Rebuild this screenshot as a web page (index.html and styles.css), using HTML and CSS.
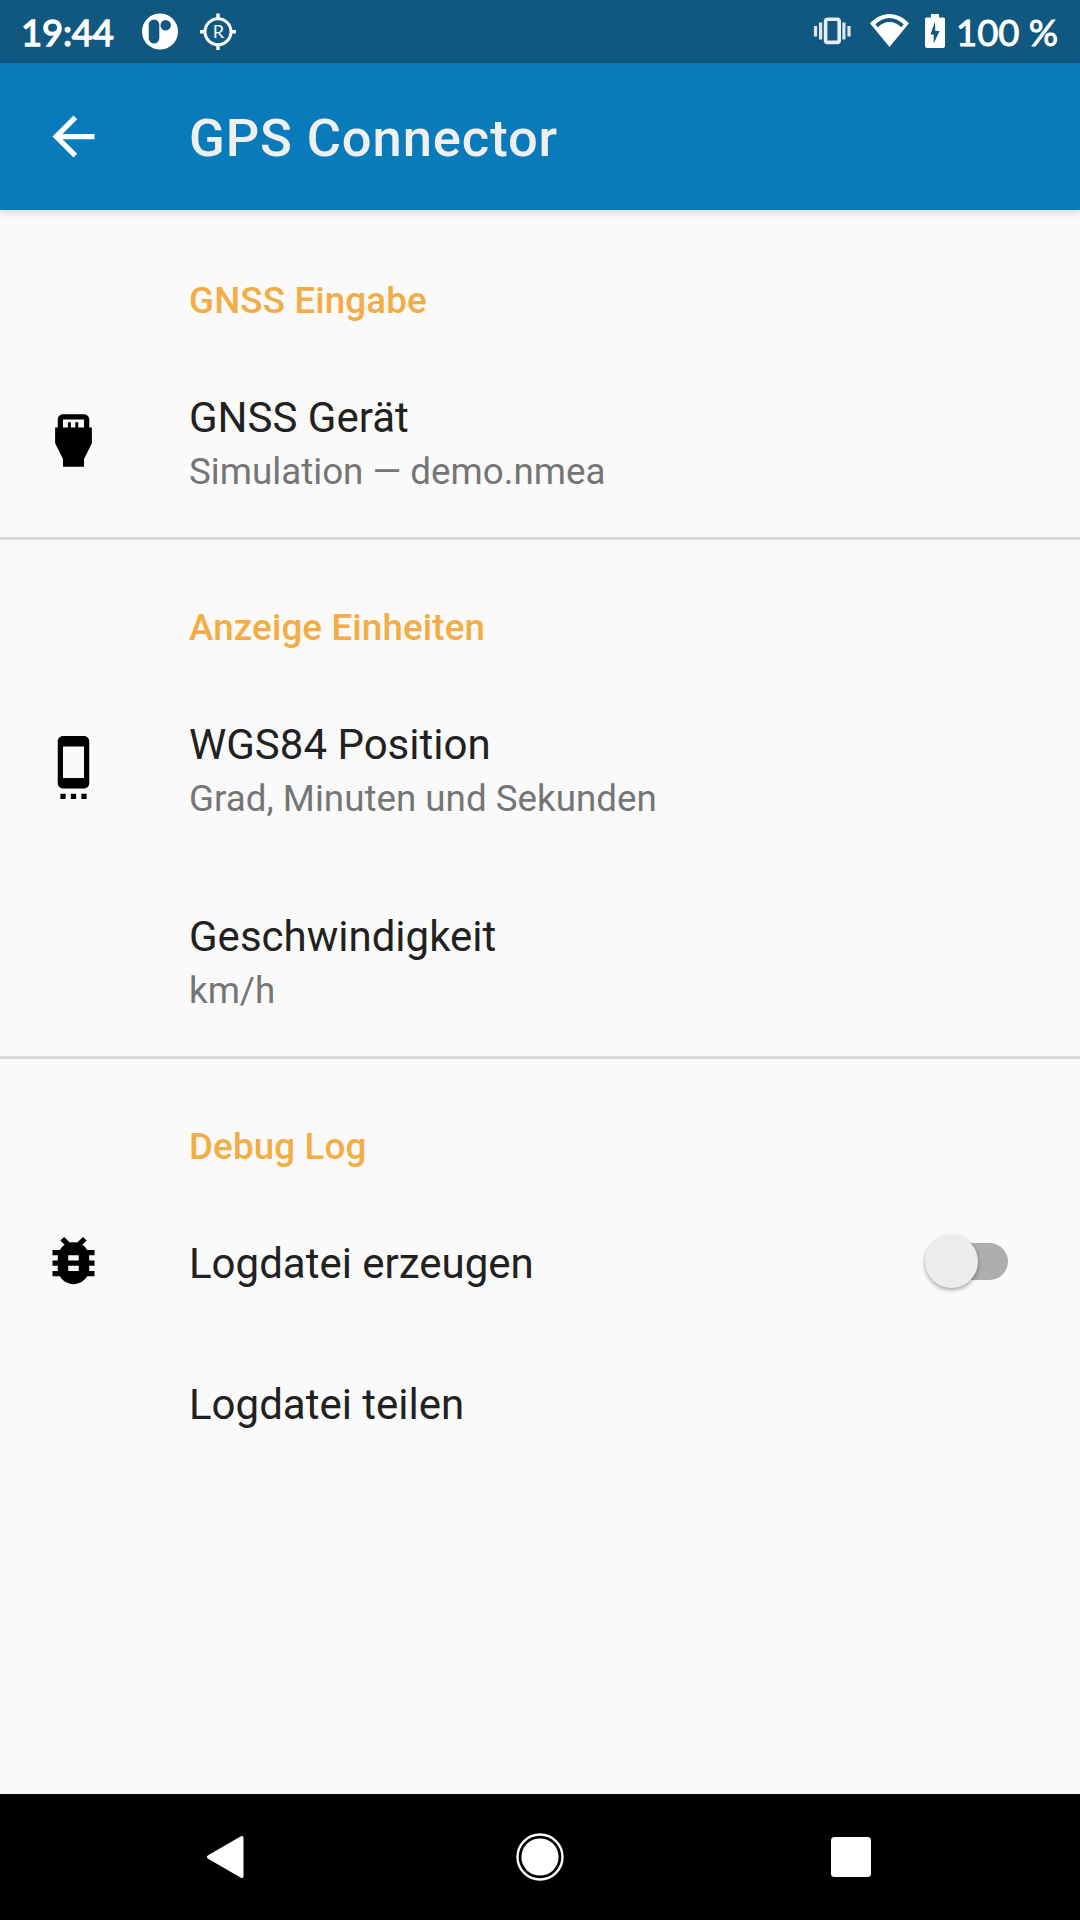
FILE: index.html
```html
<!DOCTYPE html>
<html lang="de">
<head>
<meta charset="UTF-8">
<meta name="viewport" content="width=device-width, initial-scale=1.0">
<title>GPS Connector</title>
<link rel="stylesheet" href="styles.css">
</head>
<body>
<div class="statusbar">
  <span class="clock">19:44</span>
  <svg class="notifications" width="96" height="63" viewBox="140 0 96 63">
    <circle cx="160" cy="31.5" r="18" fill="#fff"/>
    <rect x="148.7" y="19.5" width="10.6" height="24" rx="5.3" fill="#10587f"/>
    <circle cx="165.7" cy="25.2" r="5.2" fill="#10587f"/>
    <circle cx="218" cy="31.7" r="13" fill="none" stroke="#fff" stroke-width="3"/>
    <path d="M218 13.500v6M218 44v6M200 31.700h6M230 31.700h6" stroke="#fff" stroke-width="3.400"/>
    <text x="218.3" y="38" text-anchor="middle" class="badge-letter">R</text>
  </svg>
  <svg class="system-icons" width="136" height="63" viewBox="812 0 136 63" fill="#fff">
    <rect x="825.6" y="19.2" width="13.6" height="23.2" rx="2" fill="none" stroke="#e8eff3" stroke-width="3.6"/>
    <path d="M820.600 22.500v17M815.500 26v10.500M843.900 22.500v17M849 26v10.500" stroke="#dce6ec" stroke-width="3.200"/>
    <path fill-rule="evenodd" d="M889.500 47L870 23.300C875.500 17.500 882 14 889.500 14C897 14 903.500 17.500 909 23.300ZM875.300 24.300L877.800 27.200C881 24 885 22 889.500 22C894 22 898 24 901.200 27.200L903.700 24.300C899.500 20.300 894.800 18 889.500 18C884.200 18 879.500 20.300 875.300 24.300Z"/>
    <path fill-rule="evenodd" d="M931 14h8v3.500h4.500q1.500 0 1.500 1.500v27q0 2-2 2h-16q-2 0-2-2v-27q0-1.500 1.500-1.500h4.500zM935 21.500L930.500 34.500H933.700V43.500L939.500 31H935.300Z"/>
  </svg>
  <span class="battery-level">100 %</span>
</div>

<div class="toolbar">
  <svg class="icon" viewBox="0 0 24 24"><path d="M20 11H7.830l5.590-5.590L12 4l-8 8 8 8 1.410-1.410L7.830 13H20v-2z"/></svg>
  <h1>GPS Connector</h1>
</div>

<div class="settings">
  <div class="category">
    <h2>GNSS Eingabe</h2>
    <div class="item">
      <svg class="icon" viewBox="0 0 24 24"><path d="M18 7V4c0-1.100-.9-2-2-2H8c-1.100 0-2 .9-2 2v3H5v6l3 6v3h8v-3l3-6V7h-1zM8 4h8v3h-2.200V5h-1.100v2H11V5H9.900v2H8V4z"/></svg>
      <div class="text">
        <div class="title">GNSS Gerät</div>
        <div class="summary">Simulation — demo.nmea</div>
      </div>
    </div>
  </div>

  <div class="category">
    <h2>Anzeige Einheiten</h2>
    <div class="item">
      <svg class="icon" viewBox="0 0 24 24"><path d="M7 24h2v-2H7v2zm4 0h2v-2h-2v2zm4 0h2v-2h-2v2zM16 .01L8 0C6.900 0 6 .9 6 2v16c0 1.100.9 2 2 2h8c1.100 0 2-.9 2-2V2c0-1.100-.9-1.990-2-1.990zM16 16H8V4h8v12z"/></svg>
      <div class="text">
        <div class="title">WGS84 Position</div>
        <div class="summary">Grad, Minuten und Sekunden</div>
      </div>
    </div>
    <div class="item">
      <div class="icon"></div>
      <div class="text">
        <div class="title">Geschwindigkeit</div>
        <div class="summary">km/h</div>
      </div>
    </div>
  </div>

  <div class="category">
    <h2>Debug Log</h2>
    <div class="item">
      <svg class="icon" viewBox="0 0 24 24"><path d="M20 8h-2.810c-.45-.78-1.070-1.450-1.820-1.960L17 4.410 15.590 3l-2.170 2.170C12.960 5.060 12.490 5 12 5c-.49 0-.96.06-1.410.17L8.410 3 7 4.410l1.620 1.630C7.880 6.550 7.260 7.220 6.810 8H4v2h2.090c-.05.33-.09.66-.09 1v1H4v2h2v1c0 .34.04.67.09 1H4v2h2.810c1.040 1.790 2.970 3 5.190 3s4.150-1.210 5.190-3H20v-2h-2.090c.05-.33.09-.66.09-1v-1h2v-2h-2v-1c0-.34-.04-.67-.09-1H20V8zm-6 8h-4v-2h4v2zm0-4h-4v-2h4v2z"/></svg>
      <div class="text">
        <div class="title">Logdatei erzeugen</div>
      </div>
      <div class="switch"><div class="thumb"></div></div>
    </div>
    <div class="item">
      <div class="icon"></div>
      <div class="text">
        <div class="title">Logdatei teilen</div>
      </div>
    </div>
  </div>
</div>

<div class="navbar">
  <svg width="48" height="48" viewBox="0 0 48 48"><path d="M8.500 22L40.500 3.500Q43.500 2 43.500 5V43Q43.500 46 40.500 44.500L8.500 26Q5 24 8.500 22Z"/></svg>
  <svg width="48" height="48" viewBox="0 0 48 48"><circle cx="24" cy="24" r="18.600"/><circle cx="24" cy="24" r="22.500" fill="none" stroke="#fff" stroke-width="2.400"/></svg>
  <svg width="48" height="48" viewBox="0 0 48 48"><rect x="4" y="4" width="40" height="40" rx="3.500"/></svg>
</div>
</body>
</html>
```

FILE: styles.css
```css
* {
    box-sizing: border-box;
}

body {
    margin: 0;
    height: 1920px;
    display: flex;
    flex-direction: column;
    background-color: #fafafa;
    font-family: Roboto, "Liberation Sans", sans-serif;
    overflow: hidden;
}

.statusbar {
    display: flex;
    align-items: center;
    height: 63px;
    padding: 0 20px 0 21px;
    background-color: #10587f;
    color: #fff;
    font-family: Lato, sans-serif;
    font-size: 36.5px;
}

.statusbar svg {
    flex-shrink: 0;
}

.clock {
    width: 119px;
    padding-top: 1px;
    letter-spacing: -0.2px;
    -webkit-text-stroke: 1.3px #fff;
}

.battery-level {
    width: 112px;
    padding: 1px 0 0 8px;
    white-space: nowrap;
    -webkit-text-stroke: 0.9px #fff;
}

.badge-letter {
    font-family: Lato, sans-serif;
    font-size: 18px;
    fill: #fff;
}

.system-icons {
    margin-left: auto;
}

.toolbar {
    display: flex;
    align-items: center;
    height: 147px;
    padding-left: 42px;
    background-color: #097bbb;
    box-shadow: 0 2px 9px rgba(0,0,0,0.15);
}

.icon {
    width: 63px;
    height: 63px;
    margin-right: 84px;
    flex-shrink: 0;
}

.item .icon {
    margin-bottom: 2px;
}

.toolbar .icon {
    fill: #fff;
}

.toolbar h1 {
    margin: 0;
    padding-top: 3px;
    color: #f0f0f0;
    font-size: 52.5px;
    font-weight: 500;
    letter-spacing: 0.9px;
}

.settings {
    flex: 1;
}

.category + .category {
    box-shadow: inset 0 3px #dadada;
}

.category h2 {
    margin: 0;
    padding: 69px 0 23px 189px;
    color: #f4ad45;
    font-size: 36.75px;
    font-weight: 500;
    letter-spacing: 0.13px;
    line-height: 43px;
}

.item {
    display: flex;
    align-items: center;
    padding: 0 72px 0 42px;
}

.text {
    flex: 1;
    padding: 44px 0 40px;
}

.title {
    color: #212121;
    font-size: 42px;
    line-height: 57px;
}

.summary {
    color: #757575;
    font-size: 36.75px;
    line-height: 51px;
}

.switch {
    display: flex;
    align-items: center;
    width: 66px;
    height: 37px;
    border-radius: 19px;
    background-color: #aeaeae;
}

.thumb {
    flex-shrink: 0;
    width: 53px;
    height: 53px;
    margin-left: -17px;
    border-radius: 50%;
    background-color: #ececec;
    box-shadow: 0 2px 4px rgba(0,0,0,0.35);
}

.navbar {
    display: flex;
    justify-content: space-between;
    align-items: center;
    height: 126px;
    padding: 0 205px 0 200px;
    background-color: #000;
}

.navbar svg {
    fill: #fff;
}

.navbar svg:nth-child(2) {
    margin-left: 5px;
}
```
